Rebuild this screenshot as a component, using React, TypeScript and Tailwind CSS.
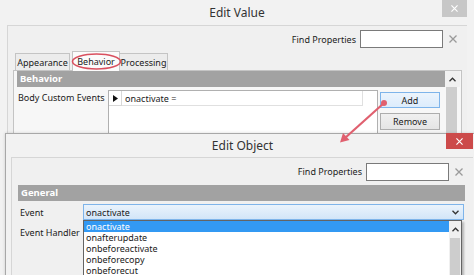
import React from "react";

const ChevUp = () => (
  <svg width="7" height="5" viewBox="0 0 7 5"><path d="M0.5 4.2 L3.5 1.2 L6.5 4.2" fill="none" stroke="#333" strokeWidth="1.3" /></svg>
);
const ChevDown = () => (
  <svg width="7" height="5" viewBox="0 0 7 5"><path d="M0.5 0.8 L3.5 3.8 L6.5 0.8" fill="none" stroke="#333" strokeWidth="1.3" /></svg>
);
const XIcon = ({ c = "#9a9a9a", s = 8 }: { c?: string; s?: number }) => (
  <svg width={s} height={s} viewBox="0 0 8 8"><path d="M0.5 0.5 L7.5 7.5 M7.5 0.5 L0.5 7.5" stroke={c} strokeWidth="1.3" /></svg>
);

export default function App() {
  return (
    <div className="w-[474px] h-[275px] relative overflow-hidden bg-[#f2f2f2] font-['Noto_Sans',sans-serif] text-[9px] text-[#1a1a1a] leading-none">
      {/* Outer dialog title */}
      <div className="h-[25px] flex items-center justify-center text-[12px] text-[#333] relative">
        Edit Value
        <div className="absolute right-[7px] top-0 w-[25px] h-[17px] bg-[#c7c7c7] flex items-center justify-center">
          <XIcon c="#ffffff" s={7} />
        </div>
      </div>
      {/* Outer client */}
      <div className="ml-[7px] mr-[7px] h-[250px] border-l border-t border-[#d6d6d6] bg-[#f0f0f0] flex flex-col">
        <div className="flex justify-end items-center pt-[4px] pr-[10px] h-[22px]">
          <span className="text-[#222]">Find Properties</span>
          <div className="ml-[4px] w-[83px] h-[18px] border border-[#7a7a7a] bg-white" />
          <div className="ml-[6px] flex items-center"><XIcon /></div>
        </div>
        {/* Tabs */}
        <div className="flex items-end ml-[7px] mt-[2px] h-[20px]">
          <div className="w-[55px] h-[17px] border border-b-0 border-[#c4c4c4] bg-[#ececec] flex items-center justify-center">Appearance</div>
          <div className="ml-[2px] w-[48px] h-[20px] border border-b-0 border-[#c4c4c4] bg-[#fbfbfb] flex items-center justify-center relative z-10 -mb-[1px]">Behavior</div>
          <div className="w-[48px] h-[17px] border border-b-0 border-l-0 border-[#c4c4c4] bg-[#ececec] flex items-center justify-center">Processing</div>
        </div>
        {/* Tab panel */}
        <div className="ml-[5px] w-[449px] flex-1 border border-[#c4c4c4] bg-[#f7f7f7] flex pl-[3px]">
          <div className="w-[428px] flex flex-col">
            <div className="h-[16px] bg-[#a2a2a2] text-white font-bold text-[9.5px] flex items-center pl-[3px]">Behavior</div>
            <div className="flex mt-[3px]">
              <div className="w-[91px] pl-[1px] pt-[3px]">Body Custom Events</div>
              <div className="w-[270px] h-[60px] border border-[#b0b0b0] bg-white">
                <div className="flex h-[15px]">
                  <div className="w-[13px] border-r border-b border-[#d8d8d8] flex items-center justify-center">
                    <svg width="5" height="7" viewBox="0 0 5 7"><path d="M0 0 L5 3.5 L0 7 Z" fill="#111" /></svg>
                  </div>
                  <div className="w-[241px] border-r border-b border-[#e0e0e0] flex items-center pl-[3px]">onactivate =</div>
                </div>
              </div>
              <div className="ml-[2px] flex flex-col pt-[2px]">
                <div className="w-[60px] h-[16px] border border-[#7eb4ea] bg-gradient-to-b from-[#ecf4fc] to-[#dcecfc] flex items-center justify-center">Add</div>
                <div className="mt-[5px] w-[60px] h-[17px] border border-[#adadad] bg-gradient-to-b from-[#f0f0f0] to-[#e5e5e5] flex items-center justify-center">Remove</div>
              </div>
            </div>
          </div>
          <div className="w-[15px] flex flex-col">
            <div className="h-[16px] flex items-center justify-center bg-[#f0f0f0]"><ChevUp /></div>
            <div className="flex-1 ml-[1px] mr-[3px] bg-[#cdcdcd]" />
          </div>
        </div>
      </div>

      {/* Inner dialog */}
      <div className="absolute z-20 left-[5px] top-[133px] w-[475px] h-[150px] border border-[#a8a8a8] bg-[#f2f2f2] shadow-[0_0_3px_rgba(0,0,0,0.15)]">
        <div className="h-[23px] flex items-center justify-center text-[12px] text-[#333] relative">
          Edit Object
          <div className="absolute right-[6px] -top-[1px] w-[27px] h-[16px] bg-[#cc4a4a] flex items-center justify-center">
            <XIcon c="#ffffff" s={7} />
          </div>
        </div>
        <div className="ml-[5px] mr-[6px] h-[130px] border-l border-t border-[#d6d6d6] bg-[#f0f0f0] flex flex-col">
          <div className="flex justify-end items-center pt-[4px] pr-[10px] h-[23px]">
            <span className="text-[#222]">Find Properties</span>
            <div className="ml-[4px] w-[83px] h-[18px] border border-[#7a7a7a] bg-white" />
            <div className="ml-[6px] flex items-center"><XIcon /></div>
          </div>
          <div className="ml-[6px] mt-[4px] w-[447px] h-[16px] bg-[#a2a2a2] text-white font-bold text-[9.5px] flex items-center pl-[3px]">General</div>
          <div className="ml-[6px] mt-[3px] flex">
            <div className="w-[65px] flex flex-col pl-[2px]">
              <div className="h-[16px] flex items-center">Event</div>
              <div className="mt-[4px] h-[16px] flex items-center">Event Handler</div>
            </div>
            <div className="relative">
              <div className="w-[381px] h-[16px] border border-[#7eb4ea] bg-gradient-to-b from-[#eaf3fc] to-[#d2e5f8] flex items-center pl-[2px] pr-[4px] justify-between">
                <span>onactivate</span>
                <ChevDown />
              </div>
              <div className="absolute left-0 top-[16px] w-[379px] h-[60px] border border-[#646464] bg-white shadow-[2px_2px_2px_rgba(0,0,0,0.25)] flex">
                <div className="flex-1 flex flex-col leading-[11px]">
                  <div className="h-[11px] bg-[#3399f3] text-white pl-[2px]">onactivate</div>
                  <div className="h-[11px] pl-[2px]">onafterupdate</div>
                  <div className="h-[11px] pl-[2px]">onbeforeactivate</div>
                  <div className="h-[11px] pl-[2px]">onbeforecopy</div>
                  <div className="h-[11px] pl-[2px]">onbeforecut</div>
                </div>
                <div className="w-[12px] flex flex-col bg-[#f0f0f0]">
                  <div className="h-[17px] flex items-center justify-center"><ChevUp /></div>
                  <div className="flex-1 mx-[1px] bg-[#cdcdcd]" />
                </div>
              </div>
            </div>
          </div>
        </div>
      </div>

      {/* Annotations */}
      <svg className="absolute z-30 left-0 top-0 pointer-events-none" width="474" height="275" viewBox="0 0 474 275">
        <ellipse cx="96.5" cy="61.5" rx="24" ry="7.5" fill="none" stroke="#d9505f" strokeWidth="1.6" />
        <circle cx="384" cy="103" r="3" fill="#e0606f" />
        <line x1="384" y1="103" x2="345" y2="138" stroke="#e0606f" strokeWidth="2.2" />
        <path d="M340 142.5 L343 133 L349.5 140 Z" fill="#e0606f" />
      </svg>
    </div>
  );
}
